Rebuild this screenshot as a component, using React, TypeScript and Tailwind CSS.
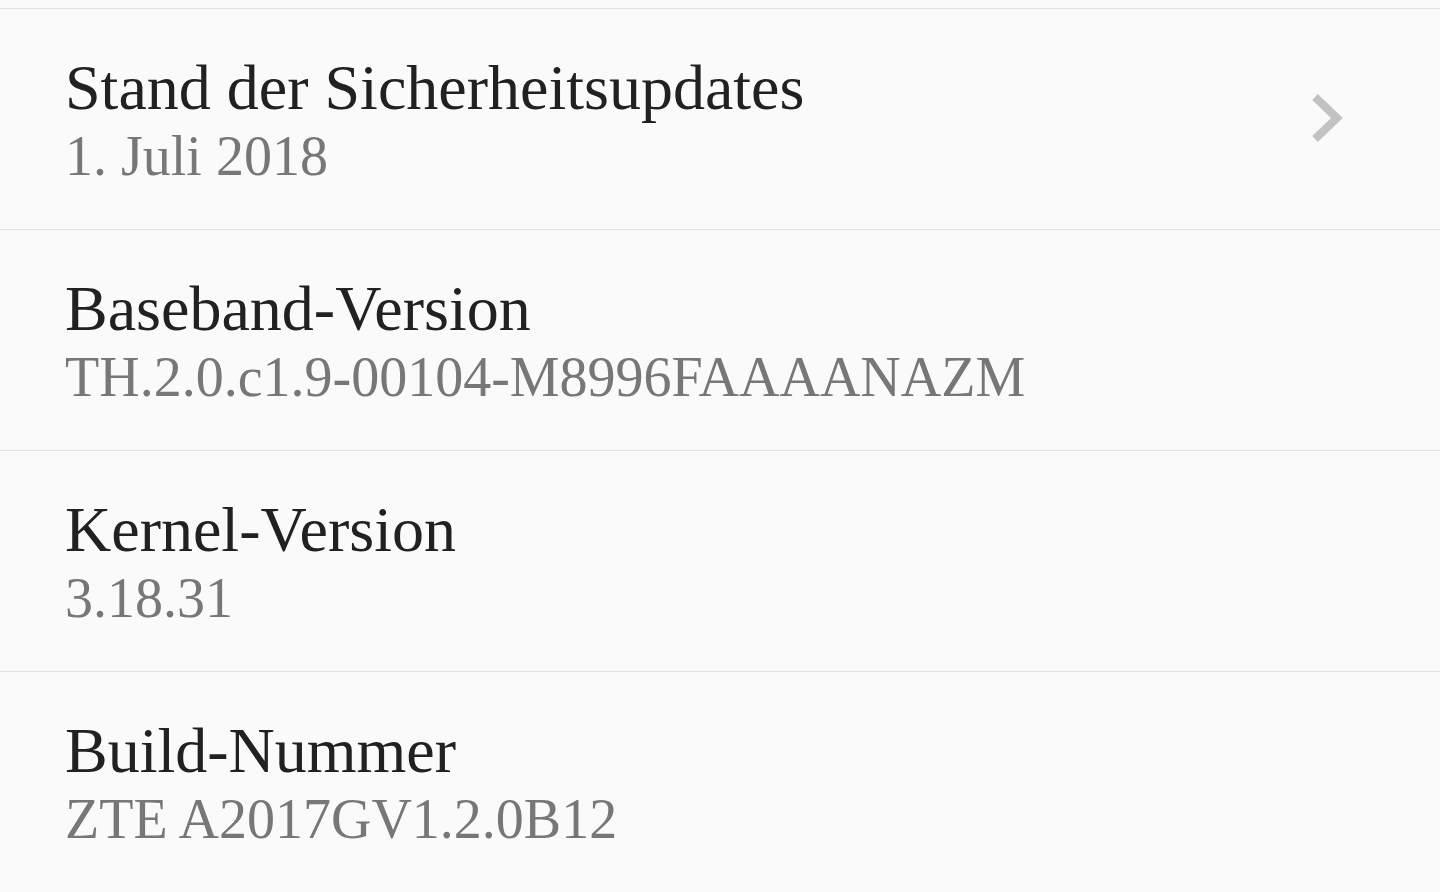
import React from "react";

const rows = [
  { title: "Stand der Sicherheitsupdates", sub: "1. Juli 2018", chevron: true },
  { title: "Baseband-Version", sub: "TH.2.0.c1.9-00104-M8996FAAAANAZM" },
  { title: "Kernel-Version", sub: "3.18.31" },
  { title: "Build-Nummer", sub: "ZTE A2017GV1.2.0B12" },
];

export default function App() {
  return (
    <div
      className="w-[1440px] h-[892px] overflow-hidden bg-[#fafafa] pt-[8px]"
      style={{ fontFamily: '"Liberation Serif", "Times New Roman", serif' }}
    >
      {rows.map((r) => (
        <div
          key={r.title}
          className="flex items-center border-t border-[#e2e2e2] h-[221px] pl-[65px] pr-[97px]"
        >
          <div className="flex-1 flex flex-col pt-[44px] pb-[38px]">
            <div className="text-[64px] leading-[67px] text-[#212121] whitespace-nowrap">
              {r.title}
            </div>
            <div className="text-[56px] leading-[70px] text-[#777777] whitespace-nowrap">
              {r.sub}
            </div>
          </div>
          {r.chevron && (
            <svg width="32" height="50" viewBox="0 0 32 50" className="mb-[2px]">
              <polyline
                points="4,4 26,25 4,46"
                fill="none"
                stroke="#c2c2c2"
                strokeWidth="8"
                strokeLinejoin="miter"
              />
            </svg>
          )}
        </div>
      ))}
    </div>
  );
}
